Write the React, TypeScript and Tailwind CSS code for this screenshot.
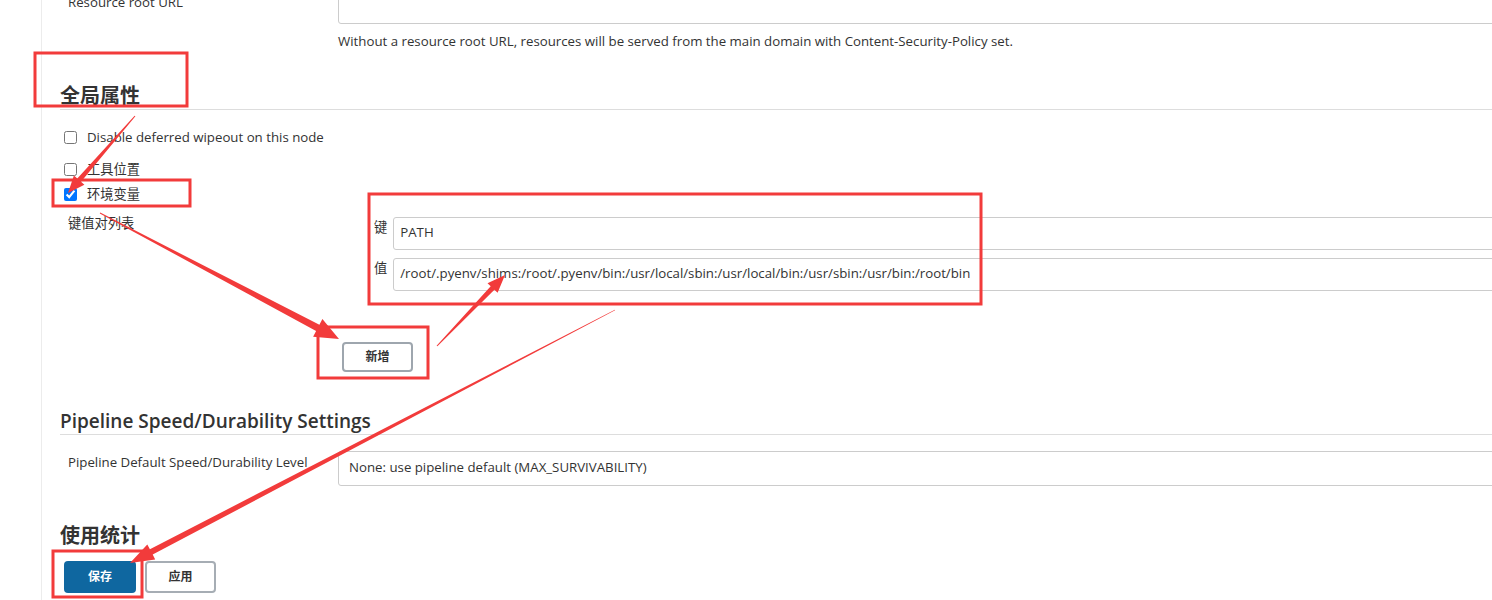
import type { ReactNode } from "react";

const RED = "#f23b3b";

// tapered arrow: thin tail, thick shaft end, triangular head
function arrowPoints(
  x1: number,
  y1: number,
  x2: number,
  y2: number,
  w0: number,
  w1: number,
  headLen: number,
  headW: number
) {
  const dx = x2 - x1;
  const dy = y2 - y1;
  const len = Math.hypot(dx, dy);
  const ux = dx / len;
  const uy = dy / len;
  const px = -uy;
  const py = ux;
  const bx = x2 - ux * headLen;
  const by = y2 - uy * headLen;
  const pts = [
    [x1 + (px * w0) / 2, y1 + (py * w0) / 2],
    [bx + (px * w1) / 2, by + (py * w1) / 2],
    [bx + (px * headW) / 2, by + (py * headW) / 2],
    [x2, y2],
    [bx - (px * headW) / 2, by - (py * headW) / 2],
    [bx - (px * w1) / 2, by - (py * w1) / 2],
    [x1 - (px * w0) / 2, y1 - (py * w0) / 2],
  ];
  return pts.map((p) => `${p[0].toFixed(1)},${p[1].toFixed(1)}`).join(" ");
}

function Field({ label, children }: { label: string; children: ReactNode }) {
  return (
    <div className="flex items-start">
      <div className="w-[278px] shrink-0 pl-2 pt-[2px] text-[13.25px] text-[#333]">{label}</div>
      <div className="flex-1">{children}</div>
    </div>
  );
}

function Check({ label, checked }: { label: string; checked?: boolean }) {
  return (
    <label className="flex items-center gap-[10px] pl-1 text-[13.25px] text-[#333]">
      <input type="checkbox" defaultChecked={checked} className="m-0 h-[13px] w-[13px]" />
      {label}
    </label>
  );
}

function Annotations() {
  return (
    <svg className="pointer-events-none absolute left-0 top-0" width="1492" height="600">
      <g fill="none" stroke={RED} strokeWidth="3">
        <rect x="35" y="53" width="152" height="53" />
        <rect x="53" y="180" width="137" height="26" />
        <rect x="369" y="194" width="612" height="110" />
        <rect x="318" y="327" width="110" height="51" />
        <rect x="53" y="551" width="89" height="46" />
      </g>
      <g fill={RED}>
        <polygon points={arrowPoints(135, 116, 68, 193, 1, 5, 17, 14)} />
        <polygon points={arrowPoints(100, 213, 339, 339, 1, 7, 24, 20)} />
        <polygon points={arrowPoints(437, 346, 505, 275, 1, 5, 18, 14)} />
        <polygon points={arrowPoints(615, 310, 130, 563, 0.5, 6, 24, 17)} />
      </g>
    </svg>
  );
}

export default function App() {
  return (
    <div className="relative h-[600px] w-[1492px] overflow-hidden bg-white font-['Open_Sans','Noto_Sans_CJK_SC',sans-serif] text-[#333]">
      <div className="flex h-full">
        <div className="w-[42px] shrink-0 border-r border-[#ececec]" />
        <div className="w-[1500px] shrink-0 pl-[18px]">
          <div className="-mt-[9px]">
            <Field label="Resource root URL">
              <div className="h-[33px] rounded-[3px] border border-[#ccc]" />
            </Field>
            <div className="ml-[278px] mt-[8px] text-[13.25px]">
              Without a resource root URL, resources will be served from the main domain with Content-Security-Policy set.
            </div>
          </div>

          <h2 className="mt-[31px] border-b border-[#ddd] text-[20px] font-bold leading-[26px]">全局属性</h2>

          <div className="mt-[18px] flex flex-col">
            <Check label="Disable deferred wipeout on this node" />
            <div className="mt-[12px]">
              <Check label="工具位置" />
            </div>
            <div className="mt-[5px]">
              <Check label="环境变量" checked />
            </div>
          </div>

          <div className="flex">
            <div className="w-[314px] shrink-0 pl-2 pt-[9px] text-[13.25px]">键值对列表</div>
            <div className="mt-[12px] flex flex-1 flex-col gap-[8px]">
              <div className="flex items-start gap-[6px]">
                <span className="pt-[1px] text-[13.25px]">键</span>
                <div className="flex h-[33px] flex-1 items-center rounded-[3px] border border-[#ccc] px-[6px] text-[13.25px]">
                  PATH
                </div>
              </div>
              <div className="flex items-start gap-[6px]">
                <span className="pt-[1px] text-[13.25px]">值</span>
                <div className="flex h-[33px] flex-1 items-center rounded-[3px] border border-[#ccc] px-[6px] text-[13.25px]">
                  /root/.pyenv/shims:/root/.pyenv/bin:/usr/local/sbin:/usr/local/bin:/usr/sbin:/usr/bin:/root/bin
                </div>
              </div>
            </div>
          </div>

          <div className="mt-[51px] pl-[282px]">
            <button className="h-[30px] w-[71px] rounded-[4px] border-2 border-[#9ea6ae] bg-white text-[12px] font-semibold text-[#333]">
              新增
            </button>
          </div>

          <h2 className="mt-[36px] border-b border-[#ddd] text-[19px] font-semibold leading-[26px]">
            Pipeline Speed/Durability Settings
          </h2>

          <div className="mt-[16px]">
            <Field label="Pipeline Default Speed/Durability Level">
              <div className="flex h-[35px] items-center rounded-[3px] border border-[#ccc] px-[10px] text-[13.25px]">
                None: use pipeline default (MAX_SURVIVABILITY)
              </div>
            </Field>
          </div>

          <h2 className="mt-[36px] text-[20px] font-bold leading-[28px]">使用统计</h2>

          <div className="mt-[11px] flex gap-[9px] pl-1">
            <button className="h-[32px] w-[72px] rounded-[4px] bg-[#0f67a0] text-[12px] font-bold text-white">保存</button>
            <button className="h-[32px] w-[71px] rounded-[4px] border-2 border-[#a6adb4] bg-white text-[12px] font-semibold text-[#333]">
              应用
            </button>
          </div>
        </div>
      </div>
      <Annotations />
    </div>
  );
}
